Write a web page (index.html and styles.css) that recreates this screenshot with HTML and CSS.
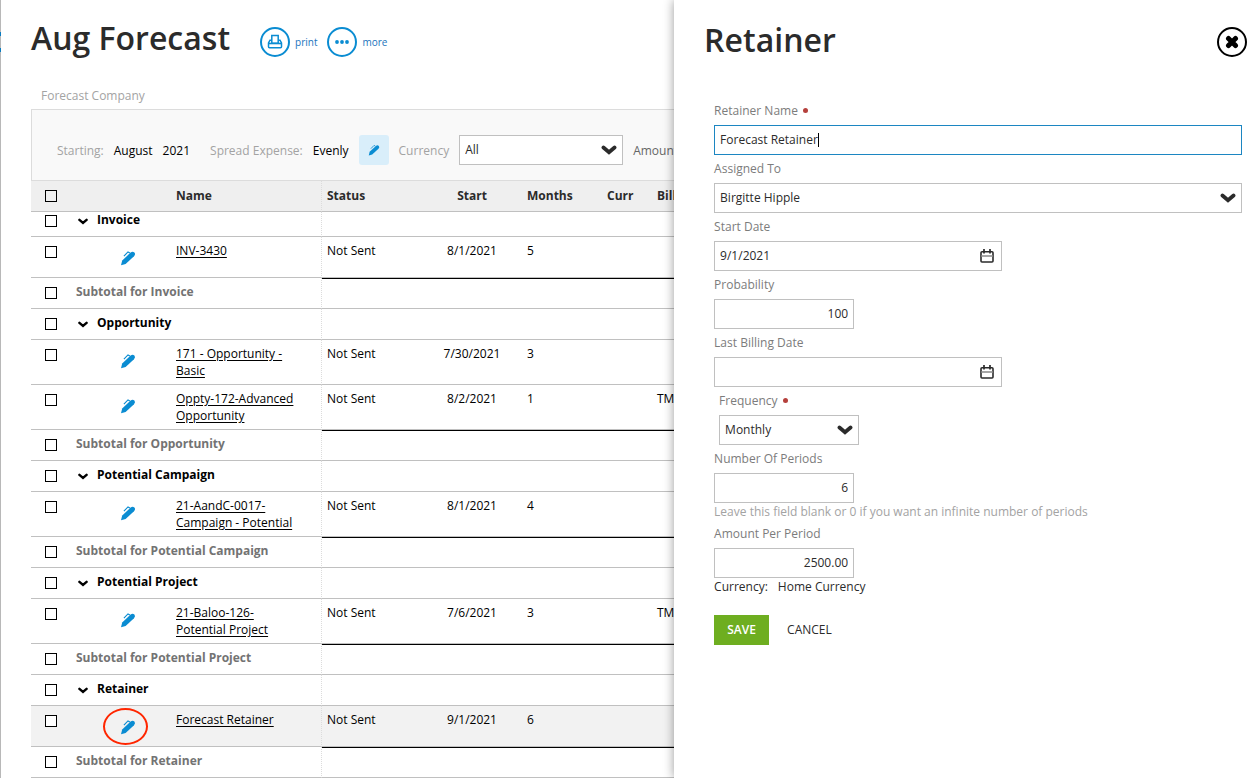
FILE: index.html
```html
<!DOCTYPE html>
<html lang="en">
<head>
<meta charset="utf-8">
<title>Aug Forecast</title>
<link rel="stylesheet" href="styles.css">
</head>
<body>
<svg class="defs" aria-hidden="true">
  <symbol id="pen" viewBox="0 0 16 16">
    <path d="M1 15.200l1.200-4.800L10.600 2.600q2-1.600 3.800-.1 1.500 1.700-.4 3.700L5.600 13.900z" fill="#0a8cd2"/>
    <path d="M3.900 6.200L8 1.900l1.900 1" fill="none" stroke="#0a8cd2" stroke-width="1.100"/>
  </symbol>
  <symbol id="chev" viewBox="0 0 14 9">
    <path d="M2 2.200l5 4.300 5-4.300" fill="none" stroke="currentColor" stroke-width="3.400" stroke-linecap="round"/>
  </symbol>
  <symbol id="cal" viewBox="0 0 14 14">
    <rect x="1" y="2.700" width="12" height="10.300" rx="1" fill="none" stroke="#2b2b2b" stroke-width="1.600"/>
    <path d="M4 0v4.500M10 0v4.500" stroke="#2b2b2b" stroke-width="1.700"/>
    <path d="M1 7h12" stroke="#888" stroke-width="1.500"/>
  </symbol>
</svg>
<div class="app">
  <main class="page">
    <header class="page-head">
      <h1>Aug Forecast</h1>
      <nav class="actions">
        <a href="#print"><span class="ring"><svg width="16" height="16" viewBox="0 0 16 16" fill="none" stroke="#0a8cd2" stroke-width="1.500"><path d="M4.800 9.300V1.500h6.400v7.800z"/><path d="M4.800 6.200H3L1.500 9v3.700q0 1 1 1h11q1 0 1-1V9L13 6.200h-1.800"/><path d="M1.500 9.500h13" stroke-width="1.600"/></svg></span>print</a>
        <a href="#more"><span class="ring"><svg width="14" height="4" viewBox="0 0 14 4" fill="#0a8cd2"><circle cx="2" cy="2" r="1.900"/><circle cx="7" cy="2" r="1.900"/><circle cx="12" cy="2" r="1.900"/></svg></span>more</a>
      </nav>
    </header>
    <p class="company">Forecast Company</p>
    <section class="board">
      <div class="filters">
        <span class="muted">Starting:</span><span class="month">August</span><span class="year">2021</span>
        <span class="muted">Spread Expense:</span><span class="even">Evenly</span>
        <button class="edit-btn" aria-label="Edit settings"><svg width="12" height="12"><use href="#pen"/></svg></button>
        <label class="muted" for="cur">Currency</label>
        <div class="select-box filter-select"><select id="cur"><option>All</option></select><svg width="16" height="10"><use href="#chev"/></svg></div>
        <span class="amount">Amount</span>
      </div>
      <table>
        <colgroup><col class="c-check"><col class="c-edit"><col class="c-name"><col class="c-status"><col class="c-start"><col class="c-months"><col class="c-curr"><col class="c-bill"></colgroup>
        <thead><tr><th><input type="checkbox" aria-label="Select all"></th><th></th><th class="name">Name</th><th>Status</th><th class="center">Start</th><th>Months</th><th>Curr</th><th>Billing</th></tr></thead>
        <tbody>
          <tr class="group first"><td><input type="checkbox" aria-label="Invoice"></td><td colspan="2" class="name"><button class="toggle"><svg width="10" height="7"><use href="#chev"/></svg>Invoice</button></td><td></td><td></td><td></td><td></td><td></td></tr>
          <tr><td><input type="checkbox" aria-label="INV-3430"></td><td class="edit"><button aria-label="Edit"><svg width="16" height="16"><use href="#pen"/></svg></button></td><td class="name"><a href="#i">INV-3430</a></td><td>Not Sent</td><td class="center">8/1/2021</td><td>5</td><td></td><td></td></tr>
          <tr class="subtotal"><td><input type="checkbox" aria-label="Subtotal"></td><td colspan="2" class="name">Subtotal for Invoice</td><td></td><td></td><td></td><td></td><td></td></tr>
          <tr class="group"><td><input type="checkbox" aria-label="Opportunity"></td><td colspan="2" class="name"><button class="toggle"><svg width="10" height="7"><use href="#chev"/></svg>Opportunity</button></td><td></td><td></td><td></td><td></td><td></td></tr>
          <tr><td><input type="checkbox" aria-label="171"></td><td class="edit"><button aria-label="Edit"><svg width="16" height="16"><use href="#pen"/></svg></button></td><td class="name"><a href="#i">171 - Opportunity - Basic</a></td><td>Not Sent</td><td class="center">7/30/2021</td><td>3</td><td></td><td></td></tr>
          <tr><td><input type="checkbox" aria-label="Oppty-172"></td><td class="edit"><button aria-label="Edit"><svg width="16" height="16"><use href="#pen"/></svg></button></td><td class="name"><a href="#i">Oppty-172-Advanced Opportunity</a></td><td>Not Sent</td><td class="center">8/2/2021</td><td>1</td><td></td><td>TM</td></tr>
          <tr class="subtotal"><td><input type="checkbox" aria-label="Subtotal"></td><td colspan="2" class="name">Subtotal for Opportunity</td><td></td><td></td><td></td><td></td><td></td></tr>
          <tr class="group"><td><input type="checkbox" aria-label="Potential Campaign"></td><td colspan="2" class="name"><button class="toggle"><svg width="10" height="7"><use href="#chev"/></svg>Potential Campaign</button></td><td></td><td></td><td></td><td></td><td></td></tr>
          <tr><td><input type="checkbox" aria-label="21-AandC-0017"></td><td class="edit"><button aria-label="Edit"><svg width="16" height="16"><use href="#pen"/></svg></button></td><td class="name"><a href="#i">21-AandC-0017-Campaign - Potential</a></td><td>Not Sent</td><td class="center">8/1/2021</td><td>4</td><td></td><td></td></tr>
          <tr class="subtotal"><td><input type="checkbox" aria-label="Subtotal"></td><td colspan="2" class="name">Subtotal for Potential Campaign</td><td></td><td></td><td></td><td></td><td></td></tr>
          <tr class="group"><td><input type="checkbox" aria-label="Potential Project"></td><td colspan="2" class="name"><button class="toggle"><svg width="10" height="7"><use href="#chev"/></svg>Potential Project</button></td><td></td><td></td><td></td><td></td><td></td></tr>
          <tr><td><input type="checkbox" aria-label="21-Baloo-126"></td><td class="edit"><button aria-label="Edit"><svg width="16" height="16"><use href="#pen"/></svg></button></td><td class="name"><a href="#i">21-Baloo-126-<br>Potential Project</a></td><td>Not Sent</td><td class="center">7/6/2021</td><td>3</td><td></td><td>TM</td></tr>
          <tr class="subtotal"><td><input type="checkbox" aria-label="Subtotal"></td><td colspan="2" class="name">Subtotal for Potential Project</td><td></td><td></td><td></td><td></td><td></td></tr>
          <tr class="group"><td><input type="checkbox" aria-label="Retainer"></td><td colspan="2" class="name"><button class="toggle"><svg width="10" height="7"><use href="#chev"/></svg>Retainer</button></td><td></td><td></td><td></td><td></td><td></td></tr>
          <tr class="active"><td><input type="checkbox" aria-label="Forecast Retainer"></td><td class="edit"><button class="marked" aria-label="Edit"><svg width="16" height="16"><use href="#pen"/></svg></button></td><td class="name"><a href="#i">Forecast Retainer</a></td><td>Not Sent</td><td class="center">9/1/2021</td><td>6</td><td></td><td></td></tr>
          <tr class="subtotal"><td><input type="checkbox" aria-label="Subtotal"></td><td colspan="2" class="name">Subtotal for Retainer</td><td></td><td></td><td></td><td></td><td></td></tr>
        </tbody>
      </table>
    </section>
  </main>
  <aside class="panel">
    <header class="panel-head">
      <h2>Retainer</h2>
      <button class="close" aria-label="Close"><svg width="14" height="14" viewBox="0 0 14 14"><path d="M3.500 3.500l7 7M10.500 3.500l-7 7" stroke="#000" stroke-width="5" stroke-linecap="round"/></svg></button>
    </header>
    <form class="form">
      <label for="rn">Retainer Name<i class="req"></i></label>
      <input class="box wide" id="rn" type="text" value="Forecast Retainer" autofocus>
      <label for="at">Assigned To</label>
      <div class="select-box"><select id="at"><option>Birgitte Hipple</option></select><svg width="16" height="10"><use href="#chev"/></svg></div>
      <label for="sd">Start Date</label>
      <div class="date-box"><input id="sd" type="text" value="9/1/2021"><svg width="14" height="14"><use href="#cal"/></svg></div>
      <label for="pr">Probability</label>
      <input class="box num" id="pr" type="text" value="100">
      <label for="lb">Last Billing Date</label>
      <div class="date-box"><input id="lb" type="text"><svg width="14" height="14"><use href="#cal"/></svg></div>
      <div class="indent">
        <label for="fr">Frequency<i class="req"></i></label>
        <div class="select-box short"><select id="fr"><option>Monthly</option></select><svg width="16" height="10"><use href="#chev"/></svg></div>
      </div>
      <label for="np">Number Of Periods</label>
      <input class="box num" id="np" type="text" value="6">
      <p class="hint">Leave this field blank or 0 if you want an infinite number of periods</p>
      <label for="ap">Amount Per Period</label>
      <input class="box num" id="ap" type="text" value="2500.00">
      <p class="note"><span>Currency:</span><span>Home Currency</span></p>
      <div class="buttons"><button type="button" class="save">SAVE</button><button type="button" class="cancel">CANCEL</button></div>
    </form>
  </aside>
</div>
</body>
</html>
```
FILE: styles.css
```css
* { box-sizing: border-box; }
body {
  margin: 0;
  background: #fff;
  color: #000;
  font: 12px/17px "Open Sans", sans-serif;
}
h1, h2, p { margin: 0; }
button, input, select { font: inherit; color: inherit; }
button { border: 0; padding: 0; background: none; cursor: pointer; }
.defs { position: absolute; width: 0; height: 0; }

.app { display: flex; height: 100vh; overflow: hidden; }
.page {
  flex: 1;
  min-width: 0;
  overflow: hidden;
  padding-left: 31px;
  background:
    linear-gradient(#0a7cc0, #0a7cc0) 0 32px / 1px 4px no-repeat,
    linear-gradient(#0a7cc0, #0a7cc0) 0 48px / 1px 4px no-repeat,
    linear-gradient(#b8b8b8, #b8b8b8) 0 0 / 1px 100% no-repeat;
}

.page-head { display: flex; align-items: center; gap: 30px; padding-top: 16px; }
h1, h2 { font-size: 32px; line-height: 44px; font-weight: 600; color: #2b2b2b; white-space: nowrap; }
.actions { display: flex; gap: 10px; padding-top: 8px; }
.actions a {
  display: flex;
  align-items: center;
  gap: 5px;
  color: #1a74bd;
  font-size: 10px;
  text-decoration: none;
}
.ring {
  display: flex;
  align-items: center;
  justify-content: center;
  width: 30px;
  height: 30px;
  border: 2px solid #0a8cd2;
  border-radius: 50%;
}
.company { padding: 27px 0 5px 10px; color: #a3a3a3; }

.board { width: 760px; border-top: 1px solid #dcdcdc; }
.filters {
  display: flex;
  align-items: center;
  gap: 10px;
  height: 71px;
  padding: 10px 0 0 25px;
  background: #f9f9f9;
  border-left: 1px solid #dcdcdc;
  border-bottom: 1px solid #dcdcdc;
  white-space: nowrap;
}
.muted { color: #a3a3a3; }
.year { margin-right: 10px; }
.amount { color: #666; }
.edit-btn {
  display: flex;
  align-items: center;
  justify-content: center;
  width: 30px;
  height: 30px;
  border-radius: 3px;
  background: #d9eefa;
}

.select-box { position: relative; display: flex; width: 100%; height: 30px; color: #2b2b2b; }
.select-box select {
  width: 100%;
  padding: 0 5px 2px;
  border: 1px solid #c0c0c0;
  border-radius: 0;
  background: #fff;
  appearance: none;
}
.select-box svg { position: absolute; right: 6px; top: 10px; pointer-events: none; }
.filter-select { width: 164px; }
.short { width: 140px; }

table { width: 100%; table-layout: fixed; border-spacing: 0; }
.c-check { width: 40px; }
.c-edit { width: 100px; }
.c-name { width: 151px; }
.c-status { width: 100px; }
.c-start { width: 100px; }
.c-months { width: 80px; }
.c-curr { width: 50px; }
th, td {
  padding: 5px;
  border-bottom: 1px solid #c0c0c0;
  text-align: left;
  vertical-align: top;
}
th { height: 31px; padding-top: 6px; background: #efefef; color: #2b2b2b; font-weight: 700; }
.center { text-align: center; }
.name { padding-right: 25px; border-right: 1px dotted #dcdcdc; }
td:first-child, th:first-child { padding: 9px 0 0 14px; }
table input {
  display: block;
  width: 12px;
  height: 12px;
  margin: 0;
  border: 1px solid #000;
  background: #fff;
  appearance: none;
}
th input { background: transparent; }
tbody tr { height: 41px; }
.group, .subtotal { height: 31px; }
.first { height: 25px; }
.group.first td { padding-top: 0; padding-bottom: 0; }
.group.first td:first-child { padding-top: 3px; }
.first .toggle { line-height: 15px; }
.subtotal .name { color: #737373; font-weight: 700; }
.subtotal .name ~ td { border-top: 1px solid #000; }
.active { background: #f2f2f2; }
td a { color: inherit; text-decoration: underline; text-underline-offset: 2px; }
.toggle { display: flex; align-items: center; gap: 9px; padding-left: 2px; font-weight: 700; }
.toggle svg { margin-top: 3px; }
td.edit { padding: 2px 0 0; }
.edit button {
  display: flex;
  align-items: center;
  justify-content: center;
  width: 45px;
  height: 37px;
  margin-left: 32px;
  padding-left: 4px;
}
.edit .marked { border: 2px solid #ff2600; border-radius: 50%; }

.panel {
  position: relative;
  flex: none;
  width: 46.5%;
  background: #fff;
  box-shadow: 0 0 10px rgba(0, 0, 0, 0.4);
}
.panel-head {
  display: flex;
  align-items: center;
  justify-content: space-between;
  padding: 18px 13px 0 30px;
}
.close {
  display: flex;
  align-items: center;
  justify-content: center;
  width: 30px;
  height: 30px;
  margin-top: 4px;
  border: 2px solid #000;
  border-radius: 50%;
}
.form { display: flex; flex-direction: column; padding: 35px 18px 0 40px; }
.form label { display: flex; align-items: center; height: 28px; padding-bottom: 2px; color: #7c7c7c; }
.req { width: 5px; height: 5px; margin-left: 5px; border-radius: 50%; background: #b5403c; }
.box, .date-box input {
  height: 30px;
  padding: 0 5px 2px;
  border: 1px solid #c0c0c0;
  background: #fff;
  color: #2b2b2b;
  outline: none;
}
.wide { width: 100%; }
.wide:focus {
  border-color: #1c86c2;
  background: linear-gradient(#000, #000) 103px 7px / 1px 14px no-repeat #fff;
  caret-color: transparent;
}
.num { width: 140px; text-align: right; }
.date-box { position: relative; width: 288px; height: 30px; }
.date-box input { width: 100%; }
.date-box svg { position: absolute; right: 8px; top: 8px; }
.indent { padding-left: 5px; }
.hint { color: #a3a3a3; }
.note { display: flex; gap: 10px; color: #2b2b2b; }
.buttons { display: flex; gap: 18px; padding-top: 20px; color: #2b2b2b; }
.buttons button { height: 30px; padding-bottom: 2px; }
.buttons .save { width: 55px; background: #6eae20; color: #fff; font-weight: 600; }
```
